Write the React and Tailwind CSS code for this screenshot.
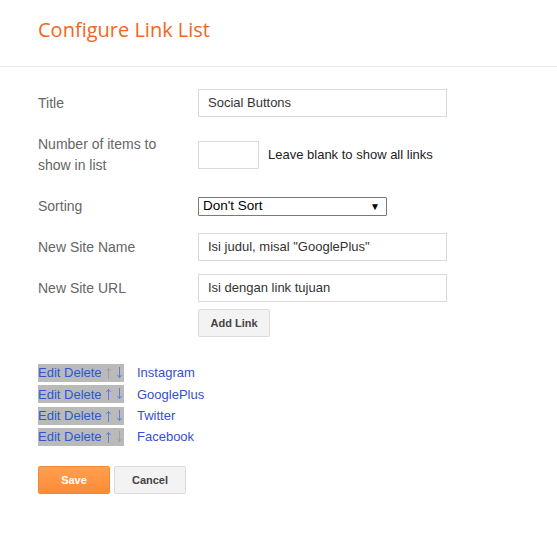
import React from "react";

const links = [
  { name: "Instagram", up: false, down: true },
  { name: "GooglePlus", up: true, down: true },
  { name: "Twitter", up: true, down: true },
  { name: "Facebook", up: true, down: false },
];

function Input({ value, w = "w-[249px]" }) {
  return (
    <div className={`${w} h-[28px] border border-[#d9d9d9] bg-white pl-[9px] flex items-center text-[13px] text-[#333]`}>
      {value}
    </div>
  );
}

function Arrow({ up, on }) {
  return (
    <svg
      width="7"
      height="14"
      viewBox="0 0 7 14"
      className={on ? "text-[#4a6fd8]" : "text-[#999999]"}
      style={{ transform: up ? "none" : "rotate(180deg)" }}
    >
      <path d="M3.5 13V2.5 M1.3 5 L3.5 2.5 L5.7 5" stroke="currentColor" strokeWidth="0.8" fill="none" />
    </svg>
  );
}

export default function App() {
  return (
    <div className="w-[557px] h-[535px] bg-white font-['Liberation_Sans',Arial,sans-serif]">
      <div className="h-[67px] border-b border-[#ebebeb] pl-[38px] pt-[16px]">
        <h1 className="font-['Open_Sans',sans-serif] text-[20px] leading-[28px] text-[#f4661b]">
          Configure Link List
        </h1>
      </div>
      <div className="pl-[38px]">
        <div className="flex items-center h-[28px] mt-[22px]">
          <div className="w-[160px] text-[14px] text-[#666]">Title</div>
          <Input value="Social Buttons" />
        </div>
        <div className="flex items-center h-[42px] mt-[17px]">
          <div className="w-[160px] text-[14px] leading-[21px] text-[#666]">
            Number of items to
            <br />
            show in list
          </div>
          <Input value="" w="w-[61px]" />
          <div className="ml-[9px] text-[13px] text-[#222]">Leave blank to show all links</div>
        </div>
        <div className="flex items-center h-[21px] mt-[20px]">
          <div className="w-[160px] text-[14px] text-[#666]">Sorting</div>
          <div className="w-[189px] h-[19px] border border-[#7a7a7a] rounded-[1px] flex items-center justify-between pl-[4px] pr-[6px] text-[13.5px] text-black">
            <span>Don't Sort</span>
            <span className="text-[10px]">▼</span>
          </div>
        </div>
        <div className="flex items-center h-[28px] mt-[16px]">
          <div className="w-[160px] text-[14px] text-[#666]">New Site Name</div>
          <Input value={'Isi judul, misal "GooglePlus"'} />
        </div>
        <div className="flex items-center h-[28px] mt-[13px]">
          <div className="w-[160px] text-[14px] text-[#666]">New Site URL</div>
          <Input value="Isi dengan link tujuan" />
        </div>
        <div className="ml-[160px] mt-[7px]">
          <button className="w-[72px] h-[28px] bg-[#f3f3f3] border border-[#dcdcdc] rounded-[2px] text-[11px] font-bold text-[#444]">
            Add Link
          </button>
        </div>
        <div className="mt-[27px] flex flex-col gap-[3.4px]">
          {links.map((l) => (
            <div key={l.name} className="flex items-center h-[18px] text-[13px]">
              <span className="bg-[#bababa] h-[18px] w-[86px] text-[#2b59d6] flex items-center">
                <span>Edit Delete</span>
                <span className="ml-[3px] flex items-center">
                  <Arrow up on={l.up} />
                </span>
                <span className="ml-[4px] flex items-center">
                  <Arrow up={false} on={l.down} />
                </span>
              </span>
              <span className="ml-[13px] text-[#3550d0]">{l.name}</span>
            </div>
          ))}
        </div>
        <div className="mt-[20px] flex gap-[4px]">
          <button className="w-[72px] h-[28px] rounded-[2px] border border-[#f08a3a] bg-gradient-to-b from-[#ffa050] to-[#ff8a35] text-white text-[11px] font-bold">
            Save
          </button>
          <button className="w-[72px] h-[28px] rounded-[2px] border border-[#dcdcdc] bg-[#f3f3f3] text-[#444] text-[11px] font-bold">
            Cancel
          </button>
        </div>
      </div>
    </div>
  );
}
